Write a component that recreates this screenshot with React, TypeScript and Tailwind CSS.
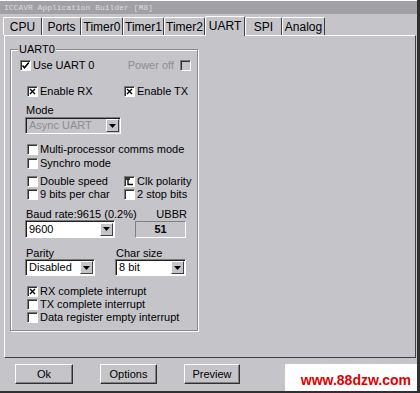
import React from 'react';

type Mark = 'check' | 'x' | 'clk' | undefined;

const tabs = [
  { label: 'CPU', w: 'w-[39px]' },
  { label: 'Ports', w: 'w-[39px]' },
  { label: 'Timer0', w: 'w-[42px]' },
  { label: 'Timer1', w: 'w-[41px]' },
  { label: 'Timer2', w: 'w-[41px]' },
  { label: 'UART', w: 'w-[40px]', active: true },
  { label: 'SPI', w: 'w-[37px]' },
  { label: 'Analog', w: 'w-[43px]' },
];

const Box = ({ mark, disabled }: { mark?: Mark; disabled?: boolean }) => (
  <span
    className={`w-[11px] h-[11px] shrink-0 border border-t-[#7a7a7a] border-l-[#7a7a7a] border-r-white border-b-white shadow-[inset_1px_1px_0_#303030] flex items-center justify-center ${
      disabled ? 'bg-[#c5c4c9]' : 'bg-white'
    }`}
  >
    {mark === 'check' && (
      <svg width="9" height="9" viewBox="0 0 9 9">
        <path d="M1.5 4.5 L3.5 6.8 L7.8 1.5" fill="none" stroke="#000" strokeWidth="1.6" />
      </svg>
    )}
    {mark === 'x' && (
      <svg width="9" height="9" viewBox="0 0 9 9">
        <path d="M2 2 L7 7 M7 2 L2 7" fill="none" stroke="#000" strokeWidth="1.4" />
      </svg>
    )}
    {mark === 'clk' && (
      <svg width="9" height="9" viewBox="0 0 9 9">
        <path d="M1 2 H5 M3 2 V7.5 H8" fill="none" stroke="#000" strokeWidth="1.3" />
      </svg>
    )}
  </span>
);

const Check = ({ label, mark, className = '' }: { label: string; mark?: Mark; className?: string }) => (
  <div className={`flex items-center h-[13px] ${className}`}>
    <Box mark={mark} />
    <span className="ml-[2px] whitespace-nowrap">{label}</span>
  </div>
);

const Arrow = () => (
  <span className="w-[13px] h-[13px] mr-[1px] shrink-0 bg-[#c5c4c9] border border-t-white border-l-white border-r-[#404040] border-b-[#404040] flex items-center justify-center">
    <svg width="7" height="4" viewBox="0 0 7 4">
      <path d="M0 0 H7 L3.5 4 Z" fill="#000" />
    </svg>
  </span>
);

const Select = ({ value, w, h, disabled }: { value: string; w: string; h: string; disabled?: boolean }) => (
  <div
    className={`${w} ${h} flex items-center border border-t-[#7a7a7a] border-l-[#7a7a7a] border-r-white border-b-white shadow-[inset_1px_1px_0_#202020] ${
      disabled ? 'bg-[#c5c4c9] text-[#8e8e8e]' : 'bg-white text-black'
    }`}
  >
    <span className="flex-1 pl-[3px] whitespace-nowrap">{value}</span>
    <Arrow />
  </div>
);

const Button = ({ label, w }: { label: string; w: string }) => (
  <div
    className={`${w} h-[20px] flex items-center justify-center bg-[#c5c4c9] border border-t-white border-l-white border-r-[#303030] border-b-[#303030] shadow-[inset_-1px_-1px_0_#808080]`}
  >
    {label}
  </div>
);

export default function App() {
  return (
    <div className="relative w-[420px] h-[393px] overflow-hidden bg-[#c5c4c9] text-[11px] leading-none text-black font-['Liberation_Sans',Arial,sans-serif] flex flex-col border-r-[3px] border-b-[2px] border-r-[#303030] border-b-[#303030]">
      <div className="h-[14px] shrink-0 bg-[#a1a0a4] flex items-center pl-[4px] text-[8px] text-[#dcdcdc] font-['Liberation_Mono',monospace] border-t border-t-white">
        ICCAVR Application Builder [M8]
      </div>

      <div className="h-[21px] shrink-0 flex items-end pl-[3px] text-[12px]">
        {tabs.map((t) => (
          <div
            key={t.label}
            className={`${t.w} flex items-center justify-center border-t border-l border-r border-t-white border-l-white border-r-[#404040] rounded-t-[2px] ${
              t.active ? 'h-[20px] relative z-10 -mb-px bg-[#c5c4c9] pb-[2px]' : 'h-[18px]'
            }`}
          >
            {t.label}
          </div>
        ))}
      </div>

      <div className="ml-[4px] w-[412px] h-[323px] shrink-0 border border-t-white border-l-white border-r-[#404040] border-b-[#404040] pl-[5px] pt-[13px]">
        <div className="relative w-[188px] h-[282px] border border-[#8a8a8a] shadow-[1px_1px_0_#fff,inset_1px_1px_0_#fff] flex flex-col">
          <span className="absolute -top-[6px] left-[7px] px-[1px] bg-[#c5c4c9]">UART0</span>

          <div className="mt-[9px] pl-[9px] pr-[6px] flex items-center justify-between">
            <Check label="Use UART 0" mark="check" />
            <div className="flex items-center h-[13px]">
              <span className="text-[#8e8e8e] mr-[6px]">Power off</span>
              <Box disabled />
            </div>
          </div>

          <div className="mt-[13px] pl-[16px] grid grid-cols-[97px_1fr]">
            <Check label="Enable RX" mark="x" />
            <Check label="Enable TX" mark="x" />
          </div>

          <div className="mt-[6px] pl-[15px] h-[13px] flex items-center">Mode</div>
          <div className="pl-[14px]">
            <Select value="Async UART" w="w-[96px]" h="h-[17px]" disabled />
          </div>

          <div className="mt-[8px] pl-[16px] flex flex-col">
            <Check label="Multi-processor comms mode" className="h-[14px]" />
            <Check label="Synchro mode" className="h-[14px]" />
          </div>

          <div className="mt-[5px] pl-[16px] grid grid-cols-[97px_1fr]">
            <Check label="Double speed" />
            <Check label="Clk polarity" mark="clk" />
            <Check label="9 bits per char" />
            <Check label="2 stop bits" />
          </div>

          <div className="mt-[7px] pl-[15px] h-[12px] flex items-center whitespace-nowrap">
            <span className="w-[121px]">Baud rate:9615 (0.2%)</span>
            <span className="w-[51px] text-center">UBBR</span>
          </div>
          <div className="pl-[14px] flex items-center">
            <Select value="9600" w="w-[90px]" h="h-[18px]" />
            <div className="ml-[20px] w-[51px] h-[17px] flex items-center justify-center font-bold border border-t-[#808080] border-l-[#808080] border-r-white border-b-white">
              51
            </div>
          </div>

          <div className="mt-[9px] pl-[15px] h-[12px] flex items-center">
            <span className="w-[90px]">Parity</span>
            <span>Char size</span>
          </div>
          <div className="pl-[14px] flex">
            <Select value="Disabled" w="w-[70px]" h="h-[17px]" />
            <div className="ml-[20px]">
              <Select value="8 bit" w="w-[71px]" h="h-[17px]" />
            </div>
          </div>

          <div className="mt-[9px] pl-[16px] flex flex-col">
            <Check label="RX complete interrupt" mark="x" />
            <Check label="TX complete interrupt" />
            <Check label="Data register empty interrupt" />
          </div>
        </div>
      </div>

      <div className="flex-1 flex items-start pt-[6px] pl-[15px] gap-[27px]">
        <Button label="Ok" w="w-[58px]" />
        <Button label="Options" w="w-[57px]" />
        <Button label="Preview" w="w-[56px]" />
      </div>

      <div className="absolute right-0 bottom-0 w-[132px] h-[27px] bg-white flex items-center justify-end pr-[6px] pt-[4px]">
        <span className="text-[14px] font-bold text-[#e00000] font-['Liberation_Sans',Arial,sans-serif]">www.88dzw.com</span>
      </div>
    </div>
  );
}
